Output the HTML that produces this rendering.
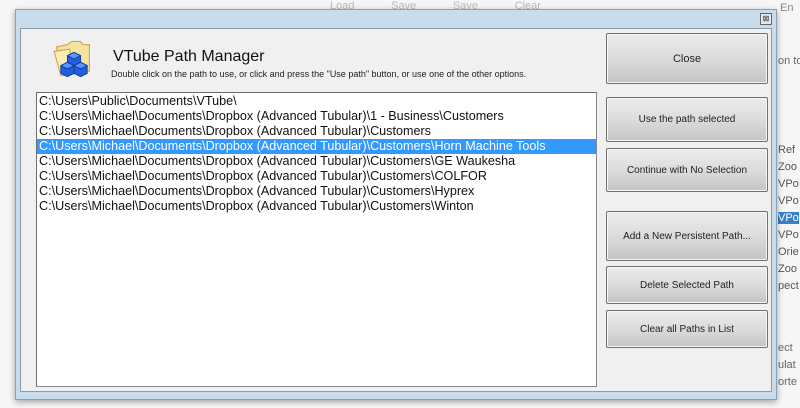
<!DOCTYPE html>
<html><head><style>
body{margin:0;width:800px;height:408px;background:#f6f6f6;position:relative;overflow:hidden;font-family:"Liberation Sans",sans-serif}
.bg{position:absolute;color:#bbb;font-size:11px;white-space:nowrap}
.win{position:absolute;left:15px;top:9px;width:762px;height:391px;background:#c9dcec;border:1px solid #8aa0b4;box-shadow:0 2px 6px rgba(0,0,0,.35);box-sizing:border-box}
.client{position:absolute;left:20px;top:28px;width:752px;height:364px;background:#f0f0f0;border:1px solid #8c9aa8;box-sizing:border-box}
.list{position:absolute;left:36px;top:92px;width:561px;height:295px;background:#fff;border:1px solid #828790;border-top-color:#6d6d6d;border-left-color:#6d6d6d;box-sizing:border-box;font-size:12.6px;line-height:15px;padding-top:1px}
.list div{padding-left:2px;color:#111;white-space:nowrap}
.list .sel{background:#3399ff;color:#fff}
.btn{position:absolute;left:606px;width:162px;box-sizing:border-box;border:1px solid #707070;border-radius:2px;background:linear-gradient(#ececec,#dcdcdc 50%,#c4c4c4);display:flex;align-items:center;justify-content:center;font-size:10px;color:#222;box-shadow:inset 0 0 0 1px #f6f6f6}
.x{position:absolute;left:760px;top:13px;width:10px;height:10px;border:1px solid #666;font-size:8px;line-height:9px;text-align:center;color:#333;background:#e6e6e6}
</style></head><body>
<div class="bg" style="left:330px;top:0">Load&nbsp;&nbsp;&nbsp;&nbsp;&nbsp;&nbsp;&nbsp;&nbsp;&nbsp;&nbsp;&nbsp;&nbsp;Save&nbsp;&nbsp;&nbsp;&nbsp;&nbsp;&nbsp;&nbsp;&nbsp;&nbsp;&nbsp;&nbsp;&nbsp;Save&nbsp;&nbsp;&nbsp;&nbsp;&nbsp;&nbsp;&nbsp;&nbsp;&nbsp;&nbsp;&nbsp;&nbsp;Clear</div>
<div class="bg" style="left:778px;top:142px;color:#555;line-height:17px">Ref<br>Zoo<br>VPo<br>VPo<br><span style="background:#3a7fc8;color:#fff">VPo</span><br>VPo<br>Orie<br>Zoo<br>pect</div>
<div class="bg" style="left:778px;top:340px;color:#666;line-height:17px">ect<br>ulat<br>orte</div>
<div class="bg" style="left:778px;top:55px;color:#666">on to</div>
<div class="bg" style="left:780px;top:2px;color:#888">En</div>
<div class="win"></div>
<div class="x">&#x22A0;</div>
<div class="client"></div>
<svg style="position:absolute;left:52px;top:38px" width="44" height="42" viewBox="0 0 40 38">
<path d="M4 8 L14 6 L18 3 L26 3 L28 6 L34 6 L34 30 L10 34 Z" fill="#f4e3a0" stroke="#c9a84a"/>
<path d="M2 12 L16 10 L20 32 L8 34 Z" fill="#f9eeb8" stroke="#caa84a"/>
<g stroke="#0b3a9a" stroke-width="0.8">
<path d="M14 16 l6-3 6 3 v7 l-6 3 -6-3z" fill="#1f5fe0"/>
<path d="M14 16 l6-3 6 3 -6 3z" fill="#5b93ff"/>
<path d="M8 25 l6-3 6 3 v7 l-6 3 -6-3z" fill="#1f5fe0"/>
<path d="M8 25 l6-3 6 3 -6 3z" fill="#5b93ff"/>
<path d="M20 25 l6-3 6 3 v7 l-6 3 -6-3z" fill="#1f5fe0"/>
<path d="M20 25 l6-3 6 3 -6 3z" fill="#5b93ff"/>
</g></svg>
<div style="position:absolute;left:113px;top:48px;font-size:16px;color:#111">VTube Path Manager</div>
<div style="position:absolute;left:111px;top:69px;font-size:9px;color:#222;white-space:nowrap">Double click on the path to use, or click and press the "Use path" button, or use one of the other options.</div>
<div class="list">
<div>C:\Users\Public\Documents\VTube\</div>
<div>C:\Users\Michael\Documents\Dropbox (Advanced Tubular)\1 - Business\Customers</div>
<div>C:\Users\Michael\Documents\Dropbox (Advanced Tubular)\Customers</div>
<div class="sel">C:\Users\Michael\Documents\Dropbox (Advanced Tubular)\Customers\Horn Machine Tools</div>
<div>C:\Users\Michael\Documents\Dropbox (Advanced Tubular)\Customers\GE Waukesha</div>
<div>C:\Users\Michael\Documents\Dropbox (Advanced Tubular)\Customers\COLFOR</div>
<div>C:\Users\Michael\Documents\Dropbox (Advanced Tubular)\Customers\Hyprex</div>
<div>C:\Users\Michael\Documents\Dropbox (Advanced Tubular)\Customers\Winton</div>
</div>
<div class="btn" style="top:33px;height:51px;font-size:11px">Close</div>
<div class="btn" style="top:97px;height:45px">Use the path selected</div>
<div class="btn" style="top:148px;height:44px">Continue with No Selection</div>
<div class="btn" style="top:211px;height:50px">Add a New Persistent Path...</div>
<div class="btn" style="top:266px;height:38px">Delete Selected Path</div>
<div class="btn" style="top:310px;height:38px">Clear all Paths in List</div>
</body></html>
